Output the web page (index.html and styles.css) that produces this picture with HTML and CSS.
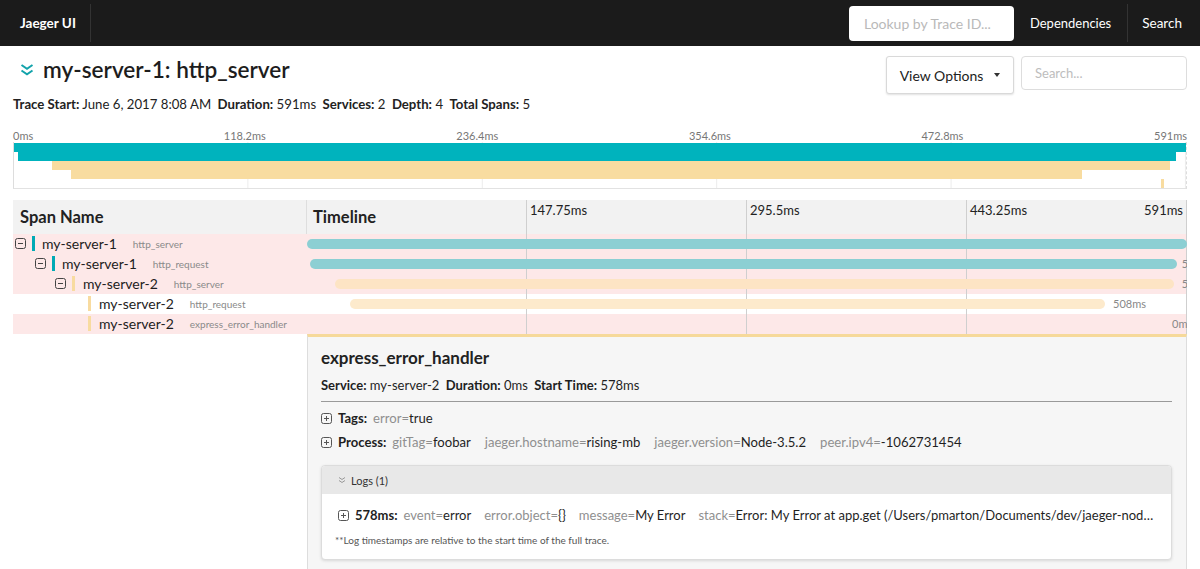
FILE: index.html
```html
<!DOCTYPE html>
<html>
<head>
<meta charset="utf-8">
<title>Jaeger UI</title>
<link rel="stylesheet" href="styles.css">
</head>
<body>
<nav class="nav">
  <div class="brand">Jaeger UI</div>
  <div class="nav-right">
    <div class="lookup">Lookup by Trace ID...</div>
    <div class="nav-item">Dependencies</div>
    <div class="nav-item sep">Search</div>
  </div>
</nav>

<main class="main">
  <div class="head">
    <div class="title">
      <svg class="title-icon" viewBox="0 0 14 14" width="14" height="14"><path d="M1.5 2 L7 5.8 L12.5 2 M1.5 7.5 L7 11.3 L12.5 7.5" fill="none" stroke="#13a3ab" stroke-width="2"/></svg>
      <h1>my-server-1: http_server</h1>
    </div>
    <div class="controls">
      <div class="btn">View Options <span class="caret"></span></div>
      <div class="search">Search...</div>
    </div>
  </div>
  <div class="overview">
    <b>Trace Start:</b> June 6, 2017 8:08 AM <b>Duration:</b> 591ms <b>Services:</b> 2 <b>Depth:</b> 4 <b>Total Spans:</b> 5
  </div>

  <div class="mini-ticks">
    <span>0ms</span><span>118.2ms</span><span>236.4ms</span><span>354.6ms</span><span>472.8ms</span><span>591ms</span>
  </div>
  <div class="mini">
    <div class="mrow"><div class="mbar teal" style="left:0%;width:100%"></div></div>
    <div class="mrow"><div class="mbar teal" style="left:0.35%;width:98.8%"></div></div>
    <div class="mrow"><div class="mbar yellow" style="left:3.2%;width:95.4%"></div></div>
    <div class="mrow"><div class="mbar yellow" style="left:4.9%;width:86.2%"></div></div>
    <div class="mrow"><div class="mbar yellow" style="left:97.9%;width:0.2%"></div></div>
  </div>

  <section class="table">
    <div class="trow thead">
      <div class="ncell"><span class="th">Span Name</span></div>
      <div class="tcell grid">
        <span class="th tl">Timeline</span>
        <span class="tick" style="left:25%">147.75ms</span>
        <span class="tick" style="left:50%">295.5ms</span>
        <span class="tick" style="left:75%">443.25ms</span>
        <span class="tick end">591ms</span>
      </div>
    </div>

    <div class="trow err">
      <div class="ncell d0">
        <svg class="tog" viewBox="0 0 11 11"><rect x="0.5" y="0.5" width="10" height="10" rx="2" fill="none" stroke="#444"/><path d="M3 5.5 H8" stroke="#444"/></svg>
        <span class="sbar teal"></span><span class="svc">my-server-1</span><span class="op">http_server</span>
      </div>
      <div class="tcell grid"><div class="bar teal" style="left:0%;width:100%"></div><span class="dur" style="left:100.8%">591ms</span></div>
    </div>

    <div class="trow err">
      <div class="ncell d1">
        <svg class="tog" viewBox="0 0 11 11"><rect x="0.5" y="0.5" width="10" height="10" rx="2" fill="none" stroke="#444"/><path d="M3 5.5 H8" stroke="#444"/></svg>
        <span class="sbar teal"></span><span class="svc">my-server-1</span><span class="op">http_request</span>
      </div>
      <div class="tcell grid"><div class="bar teal" style="left:0.35%;width:98.5%"></div><span class="dur" style="left:99.4%">588ms</span></div>
    </div>

    <div class="trow err">
      <div class="ncell d2">
        <svg class="tog" viewBox="0 0 11 11"><rect x="0.5" y="0.5" width="10" height="10" rx="2" fill="none" stroke="#444"/><path d="M3 5.5 H8" stroke="#444"/></svg>
        <span class="sbar yellow"></span><span class="svc">my-server-2</span><span class="op">http_server</span>
      </div>
      <div class="tcell grid"><div class="bar yellow" style="left:3.2%;width:95.3%"></div><span class="dur" style="left:99.4%">578ms</span></div>
    </div>

    <div class="trow">
      <div class="ncell leaf">
        <span class="sbar yellow"></span><span class="svc">my-server-2</span><span class="op">http_request</span>
      </div>
      <div class="tcell grid"><div class="bar yellow light" style="left:4.9%;width:85.8%"></div><span class="dur" style="left:91.6%">508ms</span></div>
    </div>

    <div class="trow err">
      <div class="ncell leaf">
        <span class="sbar yellow"></span><span class="svc">my-server-2</span><span class="op">express_error_handler</span>
      </div>
      <div class="tcell grid"><span class="dur" style="left:98.3%">0ms</span></div>
    </div>

    <div class="trow detail-row">
      <div class="ncell empty"></div>
      <div class="detail">
        <h2>express_error_handler</h2>
        <div class="d-over"><b>Service:</b> my-server-2 <b>Duration:</b> 0ms <b>Start Time:</b> 578ms</div>
        <hr class="divider">
        <div class="kvline">
          <svg class="plus" viewBox="0 0 11 11"><rect x="0.5" y="0.5" width="10" height="10" rx="2" fill="none" stroke="#555"/><path d="M3 5.5 H8 M5.5 3 V8" stroke="#555"/></svg>
          <b class="lbl">Tags:</b>
          <span class="kv"><span class="k">error=</span>true</span>
        </div>
        <div class="kvline">
          <svg class="plus" viewBox="0 0 11 11"><rect x="0.5" y="0.5" width="10" height="10" rx="2" fill="none" stroke="#555"/><path d="M3 5.5 H8 M5.5 3 V8" stroke="#555"/></svg>
          <b class="lbl">Process:</b>
          <span class="kv"><span class="k">gitTag=</span>foobar</span>
          <span class="kv"><span class="k">jaeger.hostname=</span>rising-mb</span>
          <span class="kv"><span class="k">jaeger.version=</span>Node-3.5.2</span>
          <span class="kv"><span class="k">peer.ipv4=</span>-1062731454</span>
        </div>
        <div class="logs">
          <div class="logs-head">
            <svg class="lchev" viewBox="0 0 8 8" width="8" height="8"><path d="M1 1.5 L4 3.5 L7 1.5 M1 4.5 L4 6.5 L7 4.5" fill="none" stroke="#999" stroke-width="1"/></svg>
            <span>Logs (1)</span>
          </div>
          <div class="logs-body">
            <div class="kvline logline">
              <svg class="plus" viewBox="0 0 11 11"><rect x="0.5" y="0.5" width="10" height="10" rx="2" fill="none" stroke="#555"/><path d="M3 5.5 H8 M5.5 3 V8" stroke="#555"/></svg>
              <b class="lbl">578ms:</b>
              <span class="kv"><span class="k">event=</span>error</span>
              <span class="kv"><span class="k">error.object=</span>{}</span>
              <span class="kv"><span class="k">message=</span>My Error</span>
              <span class="kv"><span class="k">stack=</span>Error: My Error at app.get (/Users/pmarton/Documents/dev/jaeger-node-example/server.js:12:13)</span>
            </div>
            <div class="note">**Log timestamps are relative to the start time of the full trace.</div>
          </div>
        </div>
      </div>
    </div>
  </section>
</main>
</body>
</html>
```

FILE: styles.css
```css
* { box-sizing: border-box; }
html, body { margin: 0; padding: 0; }
body {
  width: 1200px;
  height: 569px;
  overflow: hidden;
  font-family: Lato, "Noto Sans", "Liberation Sans", sans-serif;
  color: #1f1f1f;
  background: #fff;
}

/* nav */
.nav {
  height: 46px;
  background: #1b1b1b;
  display: flex;
  align-items: center;
  color: #fff;
}
.brand {
  height: 38px;
  display: flex;
  align-items: center;
  padding: 0 14px 0 20px;
  font-size: 13.5px;
  font-weight: 700;
  border-right: 1px solid #333;
}
.nav-right {
  margin-left: auto;
  display: flex;
  align-items: center;
  height: 46px;
}
.lookup {
  width: 165px;
  height: 35px;
  background: #fff;
  border-radius: 4px;
  color: #b9b9b9;
  font-size: 14px;
  padding-left: 15px;
  display: flex;
  align-items: center;
}
.nav-item {
  height: 38px;
  display: flex;
  align-items: center;
  padding: 0 16px;
  font-size: 13px;
}
.nav-item.sep {
  border-left: 1px solid #333;
  padding: 0 18px 0 14px;
  font-size: 13.5px;
}

/* main */
.main { padding: 0 13px; }
.head {
  display: flex;
  align-items: flex-start;
  margin-top: 10px;
  height: 38px;
}
.title {
  display: flex;
  align-items: center;
  height: 28px;
}
.title-icon { margin-left: 7px; }
.title h1 {
  margin: 0 0 0 9px;
  font-size: 22.6px;
  line-height: 28px;
  font-weight: 600;
  color: #1d1d1d;
}
.controls {
  margin-left: auto;
  display: flex;
  align-items: flex-start;
  gap: 7px;
}
.btn {
  width: 128px;
  height: 38px;
  border: 1px solid #d9d9d9;
  border-radius: 3px;
  background: #fff;
  box-shadow: 0 1px 2px rgba(0,0,0,0.12);
  display: flex;
  align-items: center;
  justify-content: center;
  font-size: 14px;
  color: #222;
  gap: 11px;
}
.caret {
  width: 0; height: 0;
  border-left: 3.5px solid transparent;
  border-right: 3.5px solid transparent;
  border-top: 4px solid #333;
}
.search {
  width: 166px;
  height: 34px;
  border: 1px solid #ddd;
  border-radius: 4px;
  font-size: 13px;
  color: #bdbdbd;
  padding-left: 13px;
  display: flex;
  align-items: center;
}
.overview {
  margin-top: 2px;
  font-size: 13.2px;
  line-height: 16px;
  color: #222;
}
.overview b { font-weight: 700; margin-left: 3px; }
.overview b:first-child { margin-left: 0; }

/* minimap */
.mini-ticks {
  margin-top: 16px;
  height: 14px;
  padding-top: 1px;
  display: flex;
  justify-content: space-between;
  font-size: 11px;
  line-height: 14px;
  color: #777;
}
.mini-ticks span { flex: 0 0 auto; }
.mini {
  height: 47px;
  padding-top: 1px;
  border-left: 1px solid #ddd;
  border-bottom: 1px solid #e2e2e2;
  border-right: 1px dashed #ddd;
  background-image: linear-gradient(to left, #ececec 1px, transparent 1px);
  background-size: 20% 100%;
}
.mrow { position: relative; height: 9px; }
.mbar { position: absolute; top: 0; bottom: 0; }
.mbar.teal { background: #00b3bd; }
.mbar.yellow { background: #f8dca0; }

/* table */
.table { margin-top: 11px; }
.trow {
  display: flex;
  height: 20px;
}
.ncell {
  width: 294px;
  flex: 0 0 294px;
  display: flex;
  align-items: center;
  white-space: nowrap;
  overflow: hidden;
  padding-bottom: 1px;
}
.tcell {
  flex: 1;
  position: relative;
  overflow: hidden;
}
.grid {
  background-image: linear-gradient(to left, #cfcfcf 1px, transparent 1px);
  background-size: 25% 100%;
}
.thead { height: 34px; background: #f2f2f2; }
.thead .ncell { padding-left: 7px; border-right: 1px solid #dedede; }
.th { font-size: 16.5px; font-weight: 700; color: #222; }
.thead .tl { position: absolute; left: 6px; top: 7px; }
.tick {
  position: absolute;
  top: 2px;
  font-size: 13px;
  padding-left: 3px;
  color: #222;
}
.tick.end { right: 4px; padding-left: 0; }

.err { background-color: #fde8e8; }
.d0 { padding-left: 2px; }
.d1 { padding-left: 22px; }
.d2 { padding-left: 42px; }
.leaf { padding-left: 75px; }
.tog { width: 11px; height: 11px; margin-right: 6px; flex: 0 0 11px; }
.sbar { width: 3px; height: 15px; margin-right: 7px; flex: 0 0 3px; }
.sbar.teal { background: #00aab5; }
.sbar.yellow { background: #f8dba0; margin-right: 8px; }
.svc { font-size: 14px; color: #1d1d1d; }
.op { font-size: 10px; color: #8a8a8a; margin-left: 16px; }

.bar {
  position: absolute;
  top: 5px;
  height: 10px;
  border-radius: 5px;
}
.bar.teal { background: #8ccfd3; }
.bar.yellow { background: #fde4c4; }
.bar.yellow.light { background: #fdeacc; }
.dur {
  position: absolute;
  top: 3px;
  font-size: 11px;
  color: #888;
  white-space: nowrap;
}

/* detail */
.detail-row { height: auto; }
.empty { background: #fff; }
.detail {
  flex: 1;
  background: #f6f6f6;
  border-top: 3px solid #f6d99a;
  border-left: 1px solid #ddd;
  border-right: 1px solid #ddd;
  padding: 10px 14px 20px 13px;
  min-width: 0;
}
.detail h2 {
  margin: 0;
  font-size: 17px;
  line-height: 22px;
  font-weight: 700;
  color: #222;
}
.d-over {
  margin-top: 8px;
  font-size: 13px;
  line-height: 16px;
}
.d-over b { margin-left: 3px; }
.d-over b:first-child { margin-left: 0; }
.divider {
  margin: 8px 0 0 0;
  border: 0;
  border-top: 1px solid #9a9a9a;
  height: 0;
}
.kvline {
  display: flex;
  align-items: center;
  font-size: 13.1px;
  line-height: 18px;
  white-space: nowrap;
  overflow: hidden;
  margin-top: 6px;
}
.divider + .kvline { margin-top: 7px; }
.plus { width: 11px; height: 11px; flex: 0 0 11px; margin-right: 6px; }
.lbl { font-weight: 700; margin-right: 6px; }
.kv { margin-right: 14px; color: #1f1f1f; }
.k { color: #8f8f8f; }

.logs {
  margin-top: 14px;
  border: 1px solid #dcdcdc;
  border-radius: 4px;
  background: #fff;
  box-shadow: 0 1px 3px rgba(0,0,0,0.12);
  overflow: hidden;
}
.logs-head {
  height: 28px;
  background: #e8e8e8;
  display: flex;
  align-items: center;
  padding-left: 16px;
  font-size: 11px;
  color: #333;
  gap: 5px;
}
.logs-body { padding: 12px 13px 12px 16px; }
.kvline.logline { margin-top: 0; font-size: 13px; }
.logline .kv { margin-right: 13px; }
.logline .kv:last-child {
  overflow: hidden;
  text-overflow: ellipsis;
  margin-right: 0;
  min-width: 0;
}
.note {
  margin-top: 9px;
  margin-left: -3px;
  font-size: 10px;
  line-height: 14px;
  color: #555;
}
```
